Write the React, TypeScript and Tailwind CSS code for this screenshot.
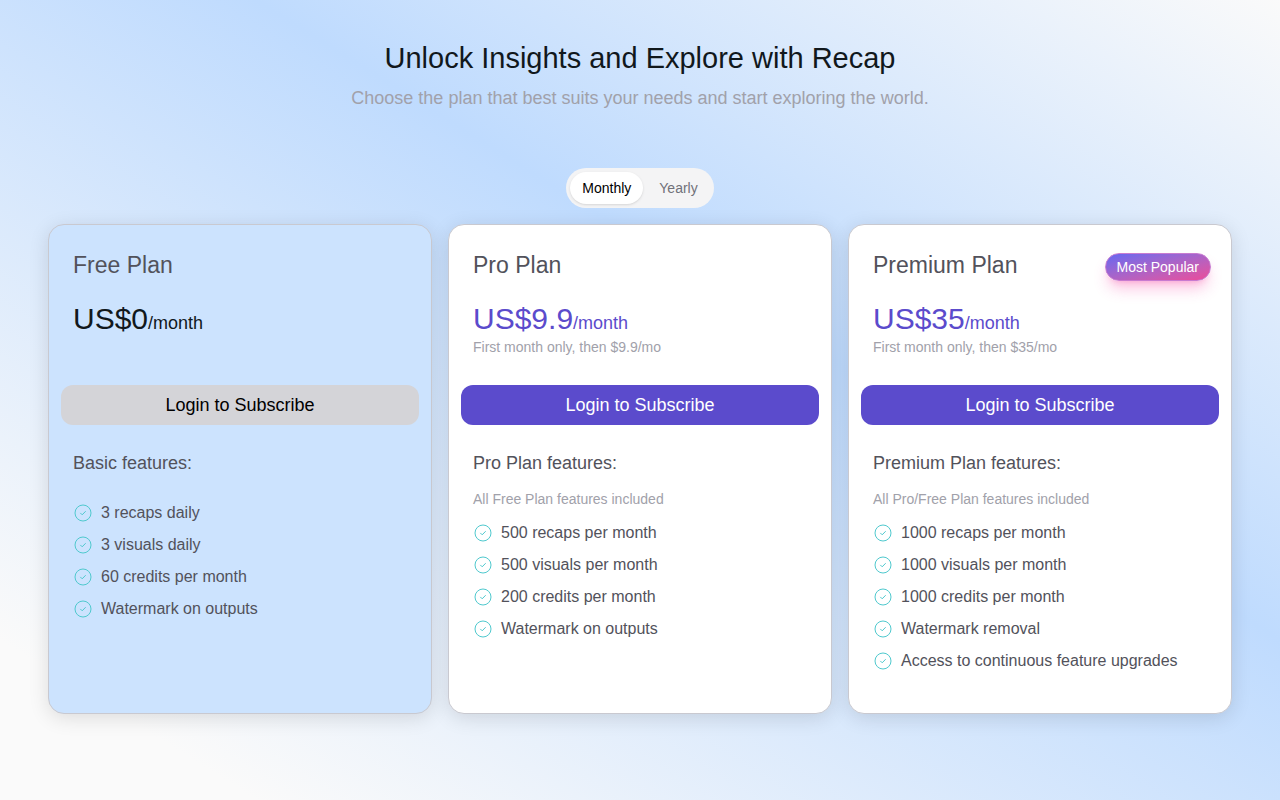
import { useState } from "react";

type Plan = {
  name: string;
  price: string;
  note?: string;
  heading: string;
  included?: string;
  features: string[];
  free?: boolean;
  popular?: boolean;
};

const plans: Plan[] = [
  {
    name: "Free Plan",
    price: "US$0",
    heading: "Basic features:",
    features: ["3 recaps daily", "3 visuals daily", "60 credits per month", "Watermark on outputs"],
    free: true,
  },
  {
    name: "Pro Plan",
    price: "US$9.9",
    note: "First month only, then $9.9/mo",
    heading: "Pro Plan features:",
    included: "All Free Plan features included",
    features: ["500 recaps per month", "500 visuals per month", "200 credits per month", "Watermark on outputs"],
  },
  {
    name: "Premium Plan",
    price: "US$35",
    note: "First month only, then $35/mo",
    heading: "Premium Plan features:",
    included: "All Pro/Free Plan features included",
    features: [
      "1000 recaps per month",
      "1000 visuals per month",
      "1000 credits per month",
      "Watermark removal",
      "Access to continuous feature upgrades",
    ],
    popular: true,
  },
];

function CheckIcon() {
  return (
    <svg className="size-5 shrink-0" viewBox="0 0 20 20" fill="none" stroke="#4fc9ce" aria-hidden="true">
      <circle cx="10" cy="10" r="8" />
      <path d="M7.6 10.2l1.6 1.6 3.2-3.3" strokeLinecap="round" strokeLinejoin="round" />
    </svg>
  );
}

function PlanCard({ plan }: { plan: Plan }) {
  return (
    <article
      className={`flex flex-col rounded-2xl border border-[#c9c9d0] px-3 pt-6 pb-10 shadow-[0_4px_20px_rgba(0,0,0,0.12)] ${plan.free ? "bg-[#cce3fe]" : "bg-white"}`}
    >
      <div className="flex items-start justify-between pl-3 pr-2">
        <h2 className="text-[23px] leading-8 text-[#52525b]">{plan.name}</h2>
        {plan.popular && (
          <span className="mt-1 rounded-full border border-[#c87bd0] bg-linear-to-br from-[#6366f1] to-[#ec4899] px-[11px] text-sm leading-[26px] text-white shadow-lg shadow-pink-500/30">
            Most Popular
          </span>
        )}
      </div>
      <div className={`flex h-26 flex-col px-3 pt-[18px] ${plan.free ? "text-[#11181c]" : "text-[#5b4bcc]"}`}>
        <p className="text-3xl leading-10">
          {plan.price}
          <span className="text-lg leading-7">/month</span>
        </p>
        {plan.note && <p className="text-sm leading-4 text-[#a1a1aa]">{plan.note}</p>}
      </div>
      <button
        type="button"
        className={`h-10 w-full rounded-xl text-lg ${plan.free ? "bg-[#d4d4d8] text-black" : "bg-[#5b4bcc] text-white"}`}
      >
        Login to Subscribe
      </button>
      <div className="px-3 pt-6">
        <h3 className="text-lg text-[#52525b]">{plan.heading}</h3>
        {plan.included && <p className="mt-3 text-sm leading-5 text-[#a1a1aa]">{plan.included}</p>}
        <ul className={`flex flex-col gap-2 ${plan.included ? "mt-3" : "mt-6"}`}>
          {plan.features.map((feature) => (
            <li key={feature} className="flex items-center gap-2 text-base text-[#52525b]">
              <CheckIcon />
              {feature}
            </li>
          ))}
        </ul>
      </div>
    </article>
  );
}

export default function App() {
  const [period, setPeriod] = useState("Monthly");
  return (
    <main className="min-h-screen bg-[linear-gradient(32deg,#fafafa_10%,#bfdbfe_60%,#fafafa_100%)] px-12 pt-9 pb-20 font-['Liberation_Sans',sans-serif]">
      <header className="flex flex-col items-center text-center">
        <h1 className="text-[29px] leading-11 text-[#11181c]">Unlock Insights and Explore with Recap</h1>
        <p className="mt-1 text-lg text-[#a1a1aa]">
          Choose the plan that best suits your needs and start exploring the world.
        </p>
        <div role="group" aria-label="Billing period" className="mt-14 flex h-10 gap-1 rounded-full bg-[#f4f4f5] p-1">
          {["Monthly", "Yearly"].map((label) => (
            <button
              key={label}
              type="button"
              aria-pressed={period === label}
              onClick={() => setPeriod(label)}
              className={`rounded-full px-3 text-sm ${period === label ? "bg-white text-black shadow-sm" : "text-[#71717a]"}`}
            >
              {label}
            </button>
          ))}
        </div>
      </header>
      <section aria-label="Plans" className="mt-4 grid grid-cols-3 gap-4">
        {plans.map((plan) => (
          <PlanCard key={plan.name} plan={plan} />
        ))}
      </section>
    </main>
  );
}
